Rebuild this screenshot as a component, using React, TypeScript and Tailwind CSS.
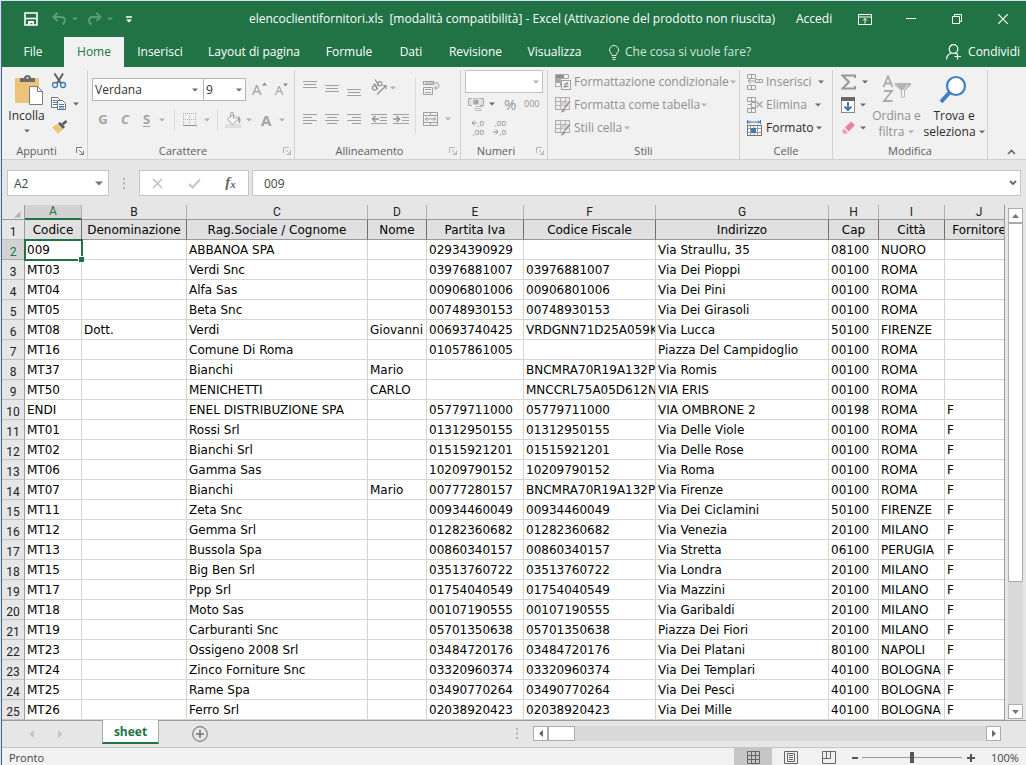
import React from "react";

const UI = "font-['Open_Sans','Noto_Sans',sans-serif]";
const SHEET = "font-['DejaVu_Sans',Verdana,sans-serif]";
const HEAD = "font-['Roboto','Liberation_Sans',sans-serif]";

type Kids = { children?: React.ReactNode };

function Svg({ w, h, className = "", children }: { w: number; h: number; className?: string } & Kids) {
  return (
    <svg width={w} height={h} viewBox={`0 0 ${w} ${h}`} fill="none" className={`shrink-0 ${className}`} aria-hidden="true">
      {children}
    </svg>
  );
}

function Caret({ className = "text-[#6a6a6a]" }: { className?: string }) {
  return (
    <Svg w={6} h={4} className={className}>
      <path d="M0 0.5h6L3 3.5z" fill="currentColor" />
    </Svg>
  );
}

const dim = "text-[#b0b0b0]";

function Btn({ label, className = "", children }: { label: string; className?: string } & Kids) {
  return (
    <button type="button" aria-label={label} className={`flex shrink-0 items-center ${className}`}>
      {children}
    </button>
  );
}

function Lines({ rows }: { rows: [number, number][] }) {
  return (
    <Svg w={15} h={16}>
      {rows.map(([x, width], i) => (
        <rect key={i} x={x} y={2 + i * 3} width={width} height="1" fill="#a0a0a0" />
      ))}
    </Svg>
  );
}

function Launcher({ active = false }: { active?: boolean }) {
  return (
    <button type="button" aria-label="Altre opzioni" className={`flex w-full justify-end pr-[3px] ${active ? "text-[#777]" : "text-[#b5b5b5]"}`}>
      <Svg w={8} h={8}>
        <path d="M0.5 6V0.5H6M3 3l4 4M7.5 3.5v4h-4" stroke="currentColor" />
      </Svg>
    </button>
  );
}

function Group({ name, width, launcher, active, children }: { name: string; width: string; launcher?: boolean; active?: boolean } & Kids) {
  return (
    <section aria-label={name} className={`flex shrink-0 flex-col border-r border-[#d2d2d2] ${width}`}>
      <div className="flex h-[73px] items-start">{children}</div>
      <div className="flex h-4 items-center text-center text-[11px] leading-4 text-[#5c5c5c]">
        <span className="flex-1">{name}</span>
        {launcher && (
          <span className="w-4">
            <Launcher active={active} />
          </span>
        )}
      </div>
    </section>
  );
}

function Divider() {
  return <span className="h-5 w-px shrink-0 bg-[#d8d8d8]" />;
}

function BrushedGrid() {
  return (
    <Svg w={16} h={16}>
      <rect x="0.5" y="0.5" width="14" height="12" fill="#ececec" stroke="#ababab" />
      <rect x="5" y="4" width="5" height="5" fill="#dccfdc" />
      <path d="M0.5 4.5h14M0.5 8.5h14M5.5 0.5v12M10.5 0.5v12" stroke="#b5b5b5" />
      <path d="M15 4.5 9 11" stroke="#f1f1f1" strokeWidth="4" />
      <path d="M15 4.5 9.5 10.5" stroke="#999" strokeWidth="2" />
      <path d="M5 15.5c2-.5 1.500-4 4-4.500 2.500 0 2.500 4.500-4 4.500z" fill="#a0a0a0" />
    </Svg>
  );
}

function Clipboard() {
  return (
    <Svg w={29} h={31}>
      <rect x="0" y="3" width="24" height="25" rx="1" fill="#ebc47a" />
      <path d="M5 7V3h4c0-4 7-4 7 0h4v4z" fill="#6b6b6b" />
      <circle cx="12.500" cy="3" r="1" fill="#f1f1f1" />
      <path d="M14.500 11.500h8l5 5v13h-13z" fill="#fff" stroke="#7a7a7a" />
      <path d="M22.500 11.500v5h5" stroke="#7a7a7a" />
    </Svg>
  );
}

function RibbonAppunti() {
  return (
    <Group name="Appunti" width="w-[86px]" launcher active>
      <button type="button" className="flex w-[49px] flex-col items-center pt-[5px] text-[#2b2b2b]">
        <span className="pl-[6px]"><Clipboard /></span>
        <span className="pt-px text-xs leading-[18px]">Incolla</span>
        <span className="pt-1"><Caret /></span>
      </button>
      <div className="flex flex-col gap-[7px] pt-[3px]">
        <Btn label="Taglia" className="h-4">
          <Svg w={16} h={16}>
            <path d="M3.500 0.500 10 10.500M12 0.500 6 10.500" stroke="#606060" strokeWidth="2" />
            <circle cx="4" cy="12" r="2.500" stroke="#3f78b5" strokeWidth="1.300" />
            <circle cx="12" cy="12" r="2.500" stroke="#3f78b5" strokeWidth="1.300" />
          </Svg>
        </Btn>
        <Btn label="Copia" className="h-4 gap-1.5">
          <Svg w={16} h={16}>
            <path d="M0.500 1.500h6l2 2v8h-8z" fill="#fff" stroke="#707070" />
            <path d="M2 4.500h4M2 6.500h4M2 8.500h4" stroke="#3f78b5" />
            <path d="M6.500 4.500h5l3 3v6h-8z" fill="#fff" stroke="#707070" />
            <path d="M8 8.500h5M8 10.500h5M8 12h5" stroke="#3f78b5" />
          </Svg>
          <Caret />
        </Btn>
        <Btn label="Copia formato" className="h-4">
          <Svg w={17} h={16}>
            <path d="M1 8 7 5l5 5-5 5z" fill="#ebc47a" />
            <path d="M7 4.500 9 3l5 5-2 2z" fill="#5c5c5c" />
            <path d="M11.500 5.500 15.500 2" stroke="#5c5c5c" strokeWidth="2.600" />
          </Svg>
        </Btn>
      </div>
    </Group>
  );
}

function RibbonCarattere() {
  return (
    <Group name="Carattere" width="w-[207px]" launcher>
      <div className="flex flex-col pl-1">
        <div className="flex items-start pt-2">
          <div className="relative flex w-[112px] items-center">
            <select aria-label="Tipo di carattere" defaultValue="Verdana" className="h-[23px] w-full appearance-none border border-[#b4b4b4] bg-white pl-[2px] text-xs text-[#333]">
              <option>Verdana</option>
              <option>Arial</option>
            </select>
            <span className="pointer-events-none absolute right-1.5"><Caret /></span>
          </div>
          <div className="relative -ml-px flex w-[43px] items-center">
            <select aria-label="Dimensione carattere" defaultValue="9" className="h-[23px] w-full appearance-none border border-[#b4b4b4] bg-white pl-[2px] text-xs text-[#333]">
              <option>9</option>
              <option>8</option>
            </select>
            <span className="pointer-events-none absolute right-1"><Caret /></span>
          </div>
          <button type="button" aria-label="Aumenta dimensione carattere" className="ml-[6px] flex h-[23px] w-[21px] items-center text-[15px] text-[#a0a0a0]">
            A<Svg w={5} h={4} className="mb-3"><path d="M0 3.500h5L2.500 0.500z" fill="#8a8a8a" /></Svg>
          </button>
          <button type="button" aria-label="Riduci dimensione carattere" className="flex h-[23px] w-[20px] items-center pt-0.5 pl-[2px] text-[13px] text-[#a0a0a0]">
            A<Svg w={5} h={4} className="mb-3"><path d="M0 0.500h5L2.500 3.500z" fill="#8a8a8a" /></Svg>
          </button>
        </div>
        <div className="mt-[9px] flex h-5 items-center text-[13px] font-bold text-[#a3a3a3]">
          <Btn label="Grassetto" className="w-[22px] justify-center">G</Btn>
          <Btn label="Corsivo" className="w-[22px] justify-center italic">C</Btn>
          <Btn label="Sottolineato" className="w-[38px] gap-[9px] pl-[7px]">
            <span className="underline underline-offset-2">S</span>
            <Caret className={dim} />
          </Btn>
          <Divider />
          <Btn label="Bordi" className="w-[42px] gap-[7px] pl-2">
            <Svg w={14} h={14}>
              <path d="M0.500 0v13M6.500 0v13M12.500 0v13M0 0.500h13M0 6.500h13" stroke="#b4a9b4" strokeDasharray="1 1" />
              <path d="M0 12.500h14" stroke="#909090" />
            </Svg>
            <Caret className={dim} />
          </Btn>
          <Divider />
          <Btn label="Colore riempimento" className="w-[43px] gap-1 pl-[7px]">
            <Svg w={17} h={17}>
              <rect x="0" y="12" width="16" height="4" fill="#dfdde2" />
              <path d="M2.500 7.500 8 2.500l5 5-5.500 5z" fill="#f6f6f6" stroke="#a3a3a3" />
              <path d="M5.500 5V1.500c0-1.500 3-1.500 3 0V7" stroke="#a3a3a3" />
              <path d="M12.500 4c3 1 4 4 2 7.500-1.500-1.500-1-4-2-7.500z" fill="#a3a3a3" />
            </Svg>
            <Caret className={dim} />
          </Btn>
          <Btn label="Colore carattere" className="gap-2 text-[15px]">A<Caret className={dim} /></Btn>
        </div>
      </div>
    </Group>
  );
}

function Indent({ left }: { left: boolean }) {
  return (
    <Svg w={17} h={16}>
      <path d="M0 2.500h16M9 5.500h7M9 8.500h7M0 11.500h16" stroke="#a0a0a0" />
      {left ? (
        <path d="M8 7H1.500M4.500 4l-3 3 3 3" stroke="#949494" strokeWidth="1.600" />
      ) : (
        <path d="M0 7h6.500M3.500 4l3 3-3 3" stroke="#949494" strokeWidth="1.600" />
      )}
    </Svg>
  );
}

function RibbonAllineamento() {
  return (
    <Group name="Allineamento" width="w-[166px]" launcher>
      <div className="flex flex-col pl-2">
        <div className="flex h-[31px] items-start gap-[7px] pt-[9px]">
          <Btn label="Allinea in alto"><Lines rows={[[0, 14], [1, 12], [0, 14]]} /></Btn>
          <Btn label="Allinea al centro" className="pt-1"><Lines rows={[[0, 14], [1, 12], [0, 14]]} /></Btn>
          <Btn label="Allinea in basso" className="pt-2"><Lines rows={[[0, 14], [1, 12], [0, 14]]} /></Btn>
          <Btn label="Orientamento" className="ml-[2px] gap-px">
            <Svg w={18} h={17}>
              <g stroke="#929292" strokeWidth="1.200">
                <circle cx="3.500" cy="9" r="2.200" />
                <path d="M2 5.500c2-1 3 0 4 3.500l1 1.500" />
                <circle cx="8.700" cy="4.800" r="2.200" />
                <path d="M4 0.500 8 6.500" />
                <path d="M6 15.500 14.500 7M11.500 6.500h3.500v3.500" />
              </g>
            </Svg>
            <Caret className={dim} />
          </Btn>
        </div>
        <div className="mt-[9px] flex h-5 items-center gap-[7px]">
          <Btn label="Allinea a sinistra"><Lines rows={[[0, 14], [0, 9], [0, 14], [0, 9]]} /></Btn>
          <Btn label="Centra"><Lines rows={[[0, 14], [2, 10], [0, 14], [2, 10]]} /></Btn>
          <Btn label="Allinea a destra"><Lines rows={[[0, 14], [5, 9], [0, 14], [5, 9]]} /></Btn>
          <Btn label="Riduci rientro" className="ml-[2px]"><Indent left /></Btn>
          <Btn label="Aumenta rientro" className="-ml-0.5"><Indent left={false} /></Btn>
        </div>
      </div>
      <span className="mt-2 ml-[5px] h-[56px] w-px bg-[#dcdcdc]" />
      <div className="flex flex-col gap-[15px] pt-[10px] pl-[7px]">
        <Btn label="Testo a capo">
          <Svg w={17} h={16}>
            <rect x="0.500" y="1.500" width="10" height="3" stroke="#a0a0a0" />
            <path d="M0.500 7.500h9v7h-9zM2 9.500h6M2 12.500h6" stroke="#a0a0a0" />
            <path d="M2 3h12.500c2 0 1.500 5 0 5H11.500M13.500 5.500 11.500 8l2 2" stroke="#a0a0a0" />
          </Svg>
        </Btn>
        <Btn label="Unisci e centra" className="gap-[6px]">
          <Svg w={16} h={16}>
            <path d="M0.500 1.500h14v13h-14zM0.500 4.500h14M0.500 11.500h14M7.500 1.500v3M7.500 11.500v3M2 8h11M4.500 6 2.500 8l2 2M10.500 6l2 2-2 2" stroke="#a0a0a0" />
          </Svg>
          <Caret className={dim} />
        </Btn>
      </div>
    </Group>
  );
}

function Decimals({ more }: { more: boolean }) {
  const arrow = (
    <Svg w={6} h={6}>
      {more ? <path d="M6 3H1M3.500 0.500 1 3l2.500 2.500" stroke="#949494" /> : <path d="M0 3h5M2.500 0.500 5 3 2.500 5.500" stroke="#949494" />}
    </Svg>
  );
  return (
    <span className="flex w-4 flex-col items-end gap-px text-[8px] leading-[8px] text-[#858585]">
      <span className="flex items-center">{more && arrow}{more ? ",0" : ",00"}</span>
      <span className="flex items-center">{!more && arrow}{more ? ",00" : ",0"}</span>
    </span>
  );
}

function RibbonNumeri() {
  return (
    <Group name="Numeri" width="w-[87px]" launcher>
      <div className="flex flex-col pl-1">
        <div className="relative flex w-[78px] items-center">
          <select aria-label="Formato numero" className="h-[23px] w-full appearance-none border border-[#c3c3c3] bg-white text-xs">
            <option></option>
          </select>
          <span className="pointer-events-none absolute right-1"><Caret className={dim} /></span>
        </div>
        <div className="flex h-[22px] items-center pl-[3px] text-[#949494]">
          <Btn label="Formato contabilità" className="w-[36px] gap-1">
            <Svg w={17} h={16}>
              <path d="M4 2.500H0.500v7H4M11 2.500h4.500v7H12" stroke="#aaa" />
              <rect x="1" y="3" width="14" height="6" fill="#e6dfe6" />
              <circle cx="8" cy="6" r="2.600" fill="#a6a6a6" />
              <path d="M5 2.500h6" stroke="#aaa" strokeDasharray="2 1" />
              <path d="M8 10.500h7M6 12.500h7M7 14.500h7" stroke="#bcbcbc" />
            </Svg>
            <Caret />
          </Btn>
          <Btn label="Percentuale" className="w-[20px] text-[15px]">%</Btn>
          <Btn label="Separatore migliaia" className="text-[9px]">000</Btn>
        </div>
        <div className="flex h-6 items-center gap-1.5 pl-[3px]">
          <Btn label="Aumenta decimali"><Decimals more /></Btn>
          <Btn label="Diminuisci decimali"><Decimals more={false} /></Btn>
        </div>
      </div>
    </Group>
  );
}

function TextCommand({ icon, label, enabled = false, className = "", caret }: { icon: React.ReactNode; label: string; enabled?: boolean; className?: string; caret: string }) {
  return (
    <button type="button" className={`flex h-[23px] items-center whitespace-nowrap text-xs ${enabled ? "text-[#2b2b2b]" : "text-[#8f8f8f]"} ${className}`}>
      {icon}
      <span className="pr-px pl-[3px]">{label}</span>
      <span className="flex-1" />
      <Caret className={caret} />
    </button>
  );
}

function RibbonStili() {
  return (
    <Group name="Stili" width="w-[192px]">
      <div className="flex flex-col pl-[7px]">
        <TextCommand
          label="Formattazione condizionale"
          className="w-[175px]"
          caret={dim}
          icon={
            <Svg w={16} h={16}>
              <path d="M0.500 0.500h13v4H0.500zM0.500 4.500h5v4h-5zM0.500 8.500h5v4h-5z" fill="#f1f1f1" stroke="#ababab" />
              <rect x="1" y="1" width="8" height="3" fill="#8d8d8d" />
              <rect x="1" y="5" width="4" height="3" fill="#a5a5a5" />
              <rect x="6.500" y="6.500" width="9" height="9" fill="#f4f4f4" stroke="#a0a0a0" />
              <path d="M8.500 10h5M8.500 12.500h5M12.500 8l-3 6" stroke="#888" />
            </Svg>
          }
        />
        <TextCommand label="Formatta come tabella" className="w-[148px]" caret={dim} icon={<BrushedGrid />} />
        <TextCommand label="Stili cella" className="w-[75px]" caret={dim} icon={<BrushedGrid />} />
      </div>
    </Group>
  );
}

function RibbonCelle() {
  return (
    <Group name="Celle" width="w-[93px]">
      <div className="flex flex-col pl-[7px]">
        <TextCommand
          label="Inserisci"
          className="w-[77px]"
          caret="text-[#6a6a6a]"
          icon={
            <Svg w={16} h={16}>
              <path d="M0.500 0.500h8v4h-8zM4.500 0.500v4M0.500 11.500h8v4h-8zM4.500 11.500v4M8.500 5.500h7v3h-7zM12 5.500v3M8 7H1M4 4.500 1 7l3 3" stroke="#a0a0a0" />
            </Svg>
          }
        />
        <TextCommand
          label="Elimina"
          className="w-[74px]"
          caret="text-[#6a6a6a]"
          icon={
            <Svg w={16} h={16}>
              <path d="M0.500 0.500h8v4h-8zM4.500 0.500v4M0.500 11.500h8v4h-8zM4.500 11.500v4M4.500 5.500h4v5h-4zM0.500 7.500h4" stroke="#a0a0a0" />
              <path d="m9.500 4.500 6 6M15.500 4.500l-6 6" stroke="#a0a0a0" strokeWidth="1.300" />
            </Svg>
          }
        />
        <TextCommand
          label="Formato"
          enabled
          className="w-[75px]"
          caret="text-[#6a6a6a]"
          icon={
            <Svg w={16} h={16}>
              <path d="M0.500 0v4M13.500 0v4M1 2h12M3 0.500 1.500 2 3 3.500M11 0.500 12.500 2 11 3.500" stroke="#3f78b5" />
              <rect x="0.500" y="5.500" width="14" height="10" fill="#fff" stroke="#707070" />
              <path d="M0.500 8.500h14M0.500 12.500h14M3.500 5.500v10M10.500 5.500v10M7 5.500v10" stroke="#9a9a9a" />
              <rect x="4" y="8" width="5" height="5" fill="#3f78b5" />
            </Svg>
          }
        />
      </div>
    </Group>
  );
}

function RibbonModifica() {
  return (
    <Group name="Modifica" width="w-[155px]">
      <div className="flex flex-col pl-2">
        <Btn label="Somma automatica" className="h-[23px] gap-1.5">
          <Svg w={15} h={16}><path d="M14 4V1.500H1.500L8 8l-6.500 6.500H14V12" stroke="#989898" strokeWidth="2" /></Svg>
          <Caret />
        </Btn>
        <Btn label="Riempimento" className="h-[23px] gap-[5px]">
          <Svg w={14} h={16}>
            <rect x="0.500" y="0.500" width="13" height="15" fill="#fff" stroke="#8a8a8a" />
            <rect width="14" height="4" fill="#686868" />
            <path d="M7 5v8M3.500 9.500 7 13l3.500-3.500" stroke="#3f78b5" strokeWidth="2" />
          </Svg>
          <Caret />
        </Btn>
        <Btn label="Cancella" className="h-[23px] gap-[5px]">
          <Svg w={14} h={16}>
            <path d="M4 7.500 10 1.500 14 5 8 11.500z" fill="#e8839b" />
            <path d="m3 8.500 4 4-2 1.500H3L1 11.500z" fill="#efa5b6" />
          </Svg>
          <Caret />
        </Btn>
      </div>
      <button type="button" className="flex w-[57px] flex-col items-center pt-[5px] text-xs leading-4 text-[#8f8f8f]">
        <Svg w={30} h={29}>
          <path d="m1.500 12 4.500-11 4.500 11M3 8.500h6M2 16h8L2 26h8.500" stroke="#ababab" strokeWidth="1.800" />
          <path d="M13 8h16v2l-6 5.500v7h-4v-7L13 10z" fill="#b5b5b5" />
          <path d="M20.500 15v6.500h1V15L26 10" stroke="#f1f1f1" />
        </Svg>
        <span className="pt-1 whitespace-nowrap">Ordina e</span>
        <span className="flex items-center gap-1">filtra <Caret className={dim} /></span>
      </button>
      <button type="button" className="flex w-[58px] flex-col items-center pt-[5px] text-xs leading-4 text-[#2b2b2b]">
        <Svg w={29} h={29}>
          <path d="m1 27 9-10" stroke="#3f7fc4" strokeWidth="4" />
          <circle cx="16" cy="11" r="9" fill="#fff" stroke="#3f7fc4" strokeWidth="2.200" />
        </Svg>
        <span className="pt-1 whitespace-nowrap">Trova e</span>
        <span className="flex items-center gap-[3px]">seleziona <Caret /></span>
      </button>
    </Group>
  );
}

function TitleBar() {
  return (
    <header className="flex h-9 items-center bg-[#217346] text-xs text-white">
      <div className="flex w-[242px] shrink-0 items-center pl-[22px]">
        <Btn label="Salva">
          <Svg w={14} h={14}>
            <path d="M1 1h12v12H1z" stroke="#fff" strokeWidth="1.600" />
            <path d="M2 6.500h10" stroke="#fff" strokeWidth="1.600" />
            <path d="M4 9h6v4H8.500v-2H6.500v2H4z" fill="#fff" />
          </Svg>
        </Btn>
        <Btn label="Annulla" className="ml-[14px] gap-1 text-[#5d9b79]">
          <Svg w={16} h={14}>
            <path d="M5.500 1 1.500 5l4 4M2 5h7.500c4 0 4.500 5 1 7.500" stroke="currentColor" strokeWidth="2" />
          </Svg>
          <Caret className="text-[#5d9b79]" />
        </Btn>
        <Btn label="Ripeti" className="ml-[9px] gap-1 text-[#5d9b79]">
          <Svg w={16} h={14}>
            <path d="m9.500 1 4 4-4 4M13 5H5.500C1.500 5 1 10 4.500 12.500" stroke="currentColor" strokeWidth="2" />
          </Svg>
          <Caret className="text-[#5d9b79]" />
        </Btn>
        <Btn label="Personalizza barra" className="ml-[13px]">
          <Svg w={6} h={7}><path d="M0 1h6" stroke="#fff" strokeWidth="1.500" /><path d="M0 3.500h6L3 6.500z" fill="#fff" /></Svg>
        </Btn>
      </div>
      <h1 className="flex-1 whitespace-pre text-center">elencoclientifornitori.xls  [modalità compatibilità] - Excel (Attivazione del prodotto non riuscita)</h1>
      <div className="flex w-[246px] shrink-0 items-center pl-4">
        <button type="button" className="w-[62px] text-left">Accedi</button>
        <Btn label="Opzioni barra multifunzione" className="w-[48px]">
          <Svg w={14} h={11}><path d="M0.500 0.500h13v10H0.500zM0.500 3h13M7 9.500v-5M5 6.500l2-2 2 2" stroke="#fff" /></Svg>
        </Btn>
        <Btn label="Riduci a icona" className="w-[46px]"><Svg w={10} h={10}><path d="M0 4.500h10" stroke="#fff" /></Svg></Btn>
        <Btn label="Ripristina" className="w-[46px]">
          <Svg w={10} h={10}><path d="M0.500 2.500h7v7h-7zM2.500 2.500v-2h7v7h-2" stroke="#fff" /></Svg>
        </Btn>
        <Btn label="Chiudi"><Svg w={10} h={10}><path d="m0 0 10 10M10 0 0 10" stroke="#fff" strokeWidth="1.200" /></Svg></Btn>
      </div>
    </header>
  );
}

const tabs: [string, string][] = [
  ["File", "w-[62px]"],
  ["Home", "w-[60px]"],
  ["Inserisci", "w-[72px]"],
  ["Layout di pagina", "w-[116px]"],
  ["Formule", "w-[74px]"],
  ["Dati", "w-[50px]"],
  ["Revisione", "w-[79px]"],
  ["Visualizza", "w-[79px]"],
];

function Tabs() {
  return (
    <nav className="flex h-[30px] items-stretch bg-[#217346] text-xs text-white">
      {tabs.map(([name, width]) => (
        <button
          key={name}
          type="button"
          className={`shrink-0 whitespace-nowrap ${width} ${name === "Home" ? "bg-[#f1f1f1] text-[#217346]" : ""}`}
        >
          {name}
        </button>
      ))}
      <div className="flex flex-1 items-center gap-1.5 pl-[15px]">
        <Svg w={10} h={15}>
          <path d="M3 10.500c0-2-2.500-3-2.500-5.500a4.500 4.500 0 0 1 9 0c0 2.500-2.500 3.500-2.500 5.500zM3 12.500h4M3.500 14.500h3" stroke="#e6f0ea" />
        </Svg>
        <input aria-label="Cerca un comando" placeholder="Che cosa si vuole fare?" className="w-full min-w-0 bg-transparent outline-none placeholder:text-[#d3e3da]" />
      </div>
      <button type="button" className="flex shrink-0 items-center gap-1.5 pr-1.5">
        <Svg w={16} h={16}>
          <circle cx="7.500" cy="5" r="4.300" stroke="#fff" strokeWidth="1.200" />
          <path d="M0.500 15.500c0-3 2-5.500 5-6.500M9 9l2 1M11.500 9.500v6M8.500 12.500h6.500" stroke="#fff" strokeWidth="1.200" />
        </Svg>
        Condividi
      </button>
    </nav>
  );
}

function FormulaBar() {
  return (
    <div className="flex h-[45px] items-start pt-[10px] pr-[5px] pl-[5px] text-xs text-[#444]">
      <div className="relative flex w-[102px] shrink-0 items-center">
        <input aria-label="Casella nome" defaultValue="A2" className="h-[26px] w-full border border-[#c6c6c6] bg-white pl-1.5 outline-none" />
        <span className="absolute right-1.5">
          <Svg w={8} h={5}><path d="M0 0.500h8L4 4.500z" fill="#777" /></Svg>
        </span>
      </div>
      <span className="flex h-[26px] w-[30px] shrink-0 items-center justify-center">
        <Svg w={2} h={11}><path d="M0 0h2v2H0zM0 4.500h2v2H0zM0 9h2v2H0z" fill="#b0b0b0" /></Svg>
      </span>
      <div className="flex h-[26px] w-[110px] shrink-0 items-center justify-around border border-[#c6c6c6] bg-white">
        <Btn label="Annulla modifica"><Svg w={11} h={11}><path d="m1 1 9 9M10 1l-9 9" stroke="#c3c3c3" strokeWidth="1.600" /></Svg></Btn>
        <Btn label="Conferma"><Svg w={13} h={11}><path d="m1 6 3.500 3.500L12 1.500" stroke="#c3c3c3" strokeWidth="2" /></Svg></Btn>
        <Btn label="Inserisci funzione" className="font-['Liberation_Serif',serif] text-[15px] font-bold italic text-[#666]">
          f<span className="pt-0.5 text-[11px]">x</span>
        </Btn>
      </div>
      <div className="relative ml-[3px] flex flex-1 items-center">
        <input aria-label="Barra della formula" defaultValue="009" className="h-[26px] w-full border border-[#c6c6c6] bg-white pl-[11px] outline-none" />
        <span className="absolute right-1">
          <Svg w={8} h={6}><path d="m1 1 3 3 3-3" stroke="#666" strokeWidth="1.800" /></Svg>
        </span>
      </div>
    </div>
  );
}

const columns: [string, string, string][] = [
  ["A", "Codice", "w-[57px]"],
  ["B", "Denominazione", "w-[105px]"],
  ["C", "Rag.Sociale / Cognome", "w-[181px]"],
  ["D", "Nome", "w-[59px]"],
  ["E", "Partita Iva", "w-[97px]"],
  ["F", "Codice Fiscale", "w-[132px]"],
  ["G", "Indirizzo", "w-[173px]"],
  ["H", "Cap", "w-[50px]"],
  ["I", "Città", "w-[66px]"],
  ["J", "Fornitore", ""],
];

const rows: string[][] = [
  ["009", "", "ABBANOA SPA", "", "02934390929", "", "Via Straullu, 35", "08100", "NUORO", ""],
  ["MT03", "", "Verdi Snc", "", "03976881007", "03976881007", "Via Dei Pioppi", "00100", "ROMA", ""],
  ["MT04", "", "Alfa Sas", "", "00906801006", "00906801006", "Via Dei Pini", "00100", "ROMA", ""],
  ["MT05", "", "Beta Snc", "", "00748930153", "00748930153", "Via Dei Girasoli", "00100", "ROMA", ""],
  ["MT08", "Dott.", "Verdi", "Giovanni", "00693740425", "VRDGNN71D25A059K", "Via Lucca", "50100", "FIRENZE", ""],
  ["MT16", "", "Comune Di Roma", "", "01057861005", "", "Piazza Del Campidoglio", "00100", "ROMA", ""],
  ["MT37", "", "Bianchi", "Mario", "", "BNCMRA70R19A132P", "Via Romis", "00100", "ROMA", ""],
  ["MT50", "", "MENICHETTI", "CARLO", "", "MNCCRL75A05D612N", "VIA ERIS", "00100", "ROMA", ""],
  ["ENDI", "", "ENEL DISTRIBUZIONE SPA", "", "05779711000", "05779711000", "VIA OMBRONE 2", "00198", "ROMA", "F"],
  ["MT01", "", "Rossi Srl", "", "01312950155", "01312950155", "Via Delle Viole", "00100", "ROMA", "F"],
  ["MT02", "", "Bianchi Srl", "", "01515921201", "01515921201", "Via Delle Rose", "00100", "ROMA", "F"],
  ["MT06", "", "Gamma Sas", "", "10209790152", "10209790152", "Via Roma", "00100", "ROMA", "F"],
  ["MT07", "", "Bianchi", "Mario", "00777280157", "BNCMRA70R19A132P", "Via Firenze", "00100", "ROMA", "F"],
  ["MT11", "", "Zeta Snc", "", "00934460049", "00934460049", "Via Dei Ciclamini", "50100", "FIRENZE", "F"],
  ["MT12", "", "Gemma Srl", "", "01282360682", "01282360682", "Via Venezia", "20100", "MILANO", "F"],
  ["MT13", "", "Bussola Spa", "", "00860340157", "00860340157", "Via Stretta", "06100", "PERUGIA", "F"],
  ["MT15", "", "Big Ben Srl", "", "03513760722", "03513760722", "Via Londra", "20100", "MILANO", "F"],
  ["MT17", "", "Ppp Srl", "", "01754040549", "01754040549", "Via Mazzini", "20100", "MILANO", "F"],
  ["MT18", "", "Moto Sas", "", "00107190555", "00107190555", "Via Garibaldi", "20100", "MILANO", "F"],
  ["MT19", "", "Carburanti Snc", "", "05701350638", "05701350638", "Piazza Dei Fiori", "20100", "MILANO", "F"],
  ["MT23", "", "Ossigeno 2008 Srl", "", "03484720176", "03484720176", "Via Dei Platani", "80100", "NAPOLI", "F"],
  ["MT24", "", "Zinco Forniture Snc", "", "03320960374", "03320960374", "Via Dei Templari", "40100", "BOLOGNA", "F"],
  ["MT25", "", "Rame Spa", "", "03490770264", "03490770264", "Via Dei Pesci", "40100", "BOLOGNA", "F"],
  ["MT26", "", "Ferro Srl", "", "02038920423", "02038920423", "Via Dei Mille", "40100", "BOLOGNA", "F"],
];

function RowNumber({ n }: { n: number }) {
  const selected = n === 2;
  return (
    <th
      scope="row"
      className={`h-5 border-r border-b p-0 align-bottom text-xs leading-[14px] font-normal ${HEAD} ${
        selected ? "border-r-[#217346] border-b-[#ababab] bg-[#d2d2d2] text-[#217346]" : "border-r-[#9b9b9b] border-b-[#c3c3c3] text-[#222]"
      }`}
    >
      {n}
    </th>
  );
}

function Grid() {
  return (
    <div className="min-w-0 flex-1 overflow-hidden border-r border-[#9b9b9b]">
      <table className={`w-[calc(100%+10px)] table-fixed border-separate border-spacing-0 text-xs text-black ${SHEET}`}>
        <colgroup>
          <col className="w-[23px]" />
          {columns.map(([letter, , width]) => (
            <col key={letter} className={width} />
          ))}
        </colgroup>
        <thead>
          <tr className={HEAD}>
            <td className="h-[15px] border-r border-b border-[#9b9b9b] p-0">
              <Svg w={7} h={7} className="mt-1 ml-[12px]"><path d="M6.500 0v6.500H0z" fill="#b5b5b5" /></Svg>
            </td>
            {columns.map(([letter]) => (
              <th
                key={letter}
                scope="col"
                className={`h-[15px] border-r p-0 text-xs leading-[13px] font-normal ${
                  letter === "A" ? "border-r-[#b0b0b0] border-b-2 border-b-[#217346] bg-[#d2d2d2] text-[#217346]" : "border-b border-r-[#b0b0b0] border-b-[#9b9b9b] text-[#222]"
                }`}
              >
                {letter}
              </th>
            ))}
          </tr>
        </thead>
        <tbody>
          <tr>
            <RowNumber n={1} />
            {columns.map(([letter, title]) => (
              <td key={letter} className="h-5 overflow-hidden border-r border-b border-r-[#707070] border-b-[#9b9b9b] bg-[#e0e0e0] p-0 pt-px text-center leading-[18px] whitespace-nowrap">
                {title}
              </td>
            ))}
          </tr>
          {rows.map((row, r) => (
            <tr key={row[0]}>
              <RowNumber n={r + 2} />
              {row.map((value, c) =>
                r === 0 && c === 0 ? (
                  <td key={c} className="relative h-5 border-r border-b border-[#d4d4d4] bg-white p-0 pt-px pl-[2px] leading-[18px]">
                    {value}
                    <span className="absolute -top-px -right-[2px] -bottom-[2px] -left-px border-2 border-[#217346]" />
                    <span className="absolute -right-[3px] -bottom-[3px] size-[6px] border-t border-l border-white bg-[#217346]" />
                  </td>
                ) : (
                  <td key={c} className="h-5 overflow-hidden border-r border-b border-[#d4d4d4] bg-white p-0 pt-px pl-[2px] leading-[18px] whitespace-nowrap">
                    {value}
                  </td>
                )
              )}
            </tr>
          ))}
        </tbody>
      </table>
    </div>
  );
}

const scrollButton = "flex size-[15px] shrink-0 items-center justify-center border border-[#ababab] bg-white";

function VerticalScroll() {
  return (
    <div className="flex w-[21px] shrink-0 flex-col pt-[3px] pb-px pl-[3px]">
      <button type="button" aria-label="Scorri su" className={scrollButton}>
        <Svg w={7} h={4}><path d="M0 4h7L3.500 0z" fill="#777" /></Svg>
      </button>
      <div className="flex w-[15px] flex-1 flex-col bg-[#dadada]">
        <span className="grow-[359] border border-[#ababab] bg-white" />
        <span className="grow-[123]" />
      </div>
      <button type="button" aria-label="Scorri giù" className={scrollButton}>
        <Svg w={7} h={4}><path d="M0 0h7L3.500 4z" fill="#777" /></Svg>
      </button>
    </div>
  );
}

function SheetBar() {
  return (
    <div className="flex h-[27px] items-start">
      <div className="flex h-full w-[100px] shrink-0 items-center border-t border-[#9b9b9b] pb-px pl-[27px]">
        <Btn label="Foglio precedente"><Svg w={5} h={8}><path d="M5 0v8L0.500 4z" fill="#c3c3c3" /></Svg></Btn>
        <Btn label="Foglio successivo" className="ml-6"><Svg w={5} h={8}><path d="M0 0v8l4.500-4z" fill="#c3c3c3" /></Svg></Btn>
      </div>
      <button type="button" className="h-[24px] w-[57px] shrink-0 border-x border-b-2 border-x-[#ababab] border-b-[#217346] bg-white pt-0.5 text-xs font-bold text-[#217346]">
        sheet
      </button>
      <div className="flex h-full flex-1 items-center justify-between border-t border-[#9b9b9b] pb-px pl-[33px]">
        <Btn label="Nuovo foglio">
          <Svg w={16} h={16}>
            <circle cx="8" cy="8" r="7.300" stroke="#808080" strokeWidth="1.200" />
            <path d="M8 4v8M4 8h8" stroke="#707070" strokeWidth="1.500" />
          </Svg>
        </Btn>
        <Svg w={2} h={11} className="mr-[15px]"><path d="M0 0h2v2H0zM0 4.500h2v2H0zM0 9h2v2H0z" fill="#b0b0b0" /></Svg>
      </div>
      <div className="flex h-full w-[493px] shrink-0 items-center border-t border-[#9b9b9b] pr-[25px] pb-px">
        <div className="flex h-[15px] flex-1 bg-[#dadada]">
          <button type="button" aria-label="Scorri a sinistra" className={scrollButton}>
            <Svg w={4} h={7}><path d="M4 0v7L0 3.500z" fill="#666" /></Svg>
          </button>
          <span className="w-[27px] border border-[#ababab] bg-white" />
          <span className="flex-1" />
          <button type="button" aria-label="Scorri a destra" className={scrollButton}>
            <Svg w={4} h={7}><path d="M0 0v7l4-3.500z" fill="#666" /></Svg>
          </button>
        </div>
      </div>
    </div>
  );
}

function StatusBar() {
  return (
    <footer className="flex h-[18px] items-center border-t border-[#c6c6c6] bg-[#f1f1f1] text-[11px] text-[#444]">
      <span className="flex-1 pt-0.5 pl-[7px] leading-4">Pronto</span>
      <Btn label="Normale" className="h-full w-[38px] justify-center bg-[#c6c6c6] pt-0.5">
        <Svg w={13} h={13}><path d="M0.500 0.500h12v12H0.500zM0.500 4.500h12M0.500 8.500h12M4.500 0.500v12M8.500 0.500v12" stroke="#666" /></Svg>
      </Btn>
      <Btn label="Layout di pagina" className="h-full w-[38px] justify-center pt-0.5">
        <Svg w={14} h={13}><path d="M0.500 0.500h13v12H0.500zM3.500 2.500h7v8h-7zM5 4.500h4M5 6.500h4M5 8.500h4" stroke="#666" /></Svg>
      </Btn>
      <Btn label="Anteprima interruzioni" className="h-full w-[38px] justify-center pt-0.5">
        <Svg w={14} h={13}><path d="M0.500 0.500h13v12H0.500zM4.500 0.500v7M8.500 0.500v7M0.500 7.500h8" stroke="#666" /></Svg>
      </Btn>
      <Btn label="Zoom indietro" className="ml-1 w-[10px] pt-0.5"><Svg w={6} h={8}><path d="M0 4h6" stroke="#555" strokeWidth="2" /></Svg></Btn>
      <input
        type="range"
        aria-label="Zoom"
        defaultValue={50}
        className="mt-0.5 h-3 w-[100px] appearance-none bg-transparent [&::-webkit-slider-runnable-track]:h-px [&::-webkit-slider-runnable-track]:bg-[#999] [&::-webkit-slider-thumb]:-mt-[5px] [&::-webkit-slider-thumb]:h-[11px] [&::-webkit-slider-thumb]:w-1 [&::-webkit-slider-thumb]:appearance-none [&::-webkit-slider-thumb]:bg-[#555]"
      />
      <Btn label="Zoom avanti" className="ml-[5px] w-[24px] pt-0.5"><Svg w={8} h={8}><path d="M0 4h8M4 0v8" stroke="#555" strokeWidth="2" /></Svg></Btn>
      <span className="w-[35px] pt-0.5 leading-4">100%</span>
    </footer>
  );
}

export default function App() {
  return (
    <div className={`flex min-h-screen border-t border-l border-[#d5e4f3] bg-[#e6e6e6] ${UI}`}>
      <div className="flex min-w-0 flex-1 flex-col overflow-hidden border-l border-[#4a6580]">
        <TitleBar />
        <Tabs />
        <div className="flex border-b border-[#d0d0d0] bg-[#f1f1f1] pt-[3px]">
          <RibbonAppunti />
          <RibbonCarattere />
          <RibbonAllineamento />
          <RibbonNumeri />
          <RibbonStili />
          <RibbonCelle />
          <RibbonModifica />
          <div className="flex flex-1 items-end justify-end pr-[10px] pb-1">
            <Btn label="Comprimi barra multifunzione">
              <Svg w={9} h={6}><path d="m1 5 3.500-3.500L8 5" stroke="#666" strokeWidth="1.600" /></Svg>
            </Btn>
          </div>
        </div>
        <FormulaBar />
        <div className="flex">
          <Grid />
          <VerticalScroll />
        </div>
        <SheetBar />
        <StatusBar />
      </div>
    </div>
  );
}
